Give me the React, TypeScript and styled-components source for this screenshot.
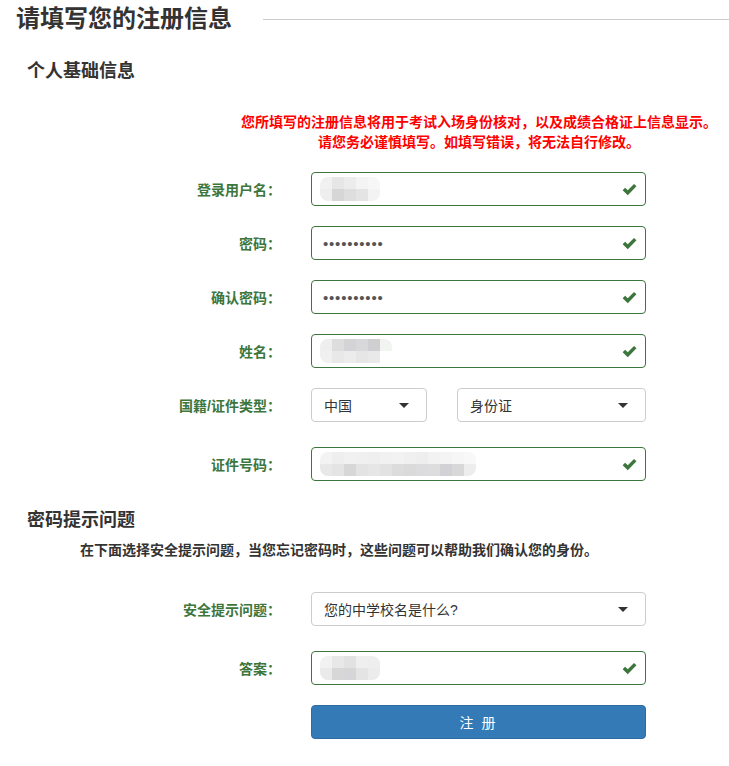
import { createGlobalStyle, styled } from 'styled-components'

const GlobalStyle = createGlobalStyle`
  html, body {
    margin: 0;
    padding: 0;
    background: #fff;
  }
  body {
    font-family: 'Liberation Sans', 'Noto Sans CJK SC', sans-serif;
    color: #333;
  }
`

type Cell = string

const userCells: Cell[][] = [
  ['#f1f1f1', '#e6e6e6', '#ececec', '#f4f4f4', '#f7f7f7'],
  ['#eeeeee', '#d6d6d6', '#dedede', '#e4e4e4', '#f3f3f3'],
]
const nameCells: Cell[][] = [
  ['#eeeeee', '#dddddd', '#d4d4d6', '#d8d8da', '#cfcfd2', '#f2f4f2'],
  ['#f0f0f0', '#e8e8e8', '#ececec', '#e6e6e6', '#e9e9e9', '#ffffff'],
]
const idCells: Cell[][] = [
  ['#f3f3f3', '#eeeeee', '#f1f1f1', '#f0f0f0', '#efefef', '#f1f1f1', '#f2f2f2', '#f0f0f0', '#eeeeee', '#f2f2f2', '#f4f4f4', '#f6f6f6', '#f8f8f8'],
  ['#e8e8e8', '#e4e4e4', '#d7d7d7', '#e3e3e3', '#e6e6e6', '#e2e2e2', '#dcdcdc', '#dadada', '#dcdcdf', '#dddddd', '#d2d2d6', '#d8d8d8', '#ededed'],
]
const answerCells: Cell[][] = [
  ['#f2f2f2', '#e8e8e8', '#e2e2e2', '#efefef', '#eeeeee'],
  ['#eaeaea', '#d7d7d7', '#d6d6d8', '#e4e4e4', '#ececec'],
]

const CheckIcon = () => (
  <CheckSvg viewBox="0 0 14 12" width="15" height="13">
    <path d="M0.6 6.6 L2.9 4.4 L5.4 6.8 L11.2 0.8 L13.5 3.0 L5.4 11.3 Z" fill="#3c763d" />
  </CheckSvg>
)

const Caret = () => <CaretShape />

const Mosaic = ({ cells, size }: { cells: Cell[][]; size: number }) => (
  <MosaicBox>
    {cells.map((row, i) => (
      <MosaicRow key={i}>
        {row.map((c, j) => (
          <MosaicCell key={j} $size={size} style={{ background: c }} />
        ))}
      </MosaicRow>
    ))}
  </MosaicBox>
)

const Dots = () => <DotText>••••••••••</DotText>

const App = () => {
  return (
    <>
      <GlobalStyle />
      <Page>
        <Header>
          <Title>请填写您的注册信息</Title>
          <HeaderRule />
        </Header>

        <SectionTitle>个人基础信息</SectionTitle>

        <Notice>
          您所填写的注册信息将用于考试入场身份核对，以及成绩合格证上信息显示。
          <br />
          请您务必谨慎填写。如填写错误，将无法自行修改。
        </Notice>

        <Form>
          <Row>
            <Label>登录用户名：</Label>
            <Field>
              <Input $ok>
                <Mosaic cells={userCells} size={12} />
                <CheckIcon />
              </Input>
            </Field>
          </Row>

          <Row>
            <Label>密码：</Label>
            <Field>
              <Input $ok>
                <Dots />
                <CheckIcon />
              </Input>
            </Field>
          </Row>

          <Row>
            <Label>确认密码：</Label>
            <Field>
              <Input $ok>
                <Dots />
                <CheckIcon />
              </Input>
            </Field>
          </Row>

          <Row>
            <Label>姓名：</Label>
            <Field>
              <Input $ok>
                <Mosaic cells={nameCells} size={12} />
                <CheckIcon />
              </Input>
            </Field>
          </Row>

          <Row $extra>
            <Label>国籍/证件类型：</Label>
            <SplitField>
              <Select $width={116}>
                <span>中国</span>
                <Caret />
              </Select>
              <Select $width={189}>
                <span>身份证</span>
                <Caret />
              </Select>
            </SplitField>
          </Row>

          <Row>
            <Label>证件号码：</Label>
            <Field>
              <Input $ok>
                <Mosaic cells={idCells} size={12} />
                <CheckIcon />
              </Input>
            </Field>
          </Row>
        </Form>

        <SectionTitle $second>密码提示问题</SectionTitle>
        <Hint>在下面选择安全提示问题，当您忘记密码时，这些问题可以帮助我们确认您的身份。</Hint>

        <Form $second>
          <Row $extra>
            <Label>安全提示问题：</Label>
            <Field>
              <Select $width={335}>
                <span>您的中学校名是什么?</span>
                <Caret />
              </Select>
            </Field>
          </Row>

          <Row>
            <Label>答案：</Label>
            <Field>
              <Input $ok>
                <Mosaic cells={answerCells} size={12} />
                <CheckIcon />
              </Input>
            </Field>
          </Row>

          <Row>
            <Label />
            <Field>
              <SubmitButton type="button">注 册</SubmitButton>
            </Field>
          </Row>
        </Form>
      </Page>
    </>
  )
}

export default App

const Page = styled.div`
  width: 729px;
  padding: 2px 0 20px;
  box-sizing: border-box;
`

const Header = styled.div`
  display: flex;
  align-items: center;
  padding-left: 16px;
`

const Title = styled.h1`
  margin: 0;
  font-size: 24px;
  line-height: 34px;
  font-weight: bold;
  color: #333;
`

const HeaderRule = styled.div`
  flex: 1;
  height: 1px;
  background: #cccccc;
  margin-left: 31px;
  margin-top: 1px;
`

const SectionTitle = styled.h2<{ $second?: boolean }>`
  margin: ${(p) => (p.$second ? '26px' : '22px')} 0 0 27px;
  font-size: 18px;
  line-height: 26px;
  font-weight: bold;
  color: #333;
`

const Notice = styled.p`
  margin: 28px 0 0 229px;
  width: 500px;
  text-align: center;
  color: #ff0000;
  font-size: 14px;
  line-height: 20px;
  font-weight: bold;
`

const Hint = styled.p`
  margin: 7px 0 0 80px;
  font-size: 14px;
  line-height: 20px;
  font-weight: bold;
  color: #333;
`

const Form = styled.div<{ $second?: boolean }>`
  display: flex;
  flex-direction: column;
  gap: 20px;
  margin-top: ${(p) => (p.$second ? '32px' : '20px')};
`

const Row = styled.div<{ $extra?: boolean }>`
  display: flex;
  align-items: center;
  margin-bottom: ${(p) => (p.$extra ? '5px' : '0')};
`

const Label = styled.label`
  width: 281px;
  text-align: right;
  color: #3c763d;
  font-size: 14px;
  font-weight: bold;
  flex-shrink: 0;
`

const Field = styled.div`
  margin-left: 30px;
  width: 335px;
`

const SplitField = styled(Field)`
  display: flex;
  justify-content: space-between;
`

const Input = styled.div<{ $ok?: boolean }>`
  height: 34px;
  box-sizing: border-box;
  border: 1px solid ${(p) => (p.$ok ? '#3c763d' : '#cccccc')};
  border-radius: 4px;
  display: flex;
  align-items: center;
  justify-content: space-between;
  padding: 0 8px 0 8px;
  background: #fff;
`

const Select = styled.div<{ $width: number }>`
  width: ${(p) => p.$width}px;
  height: 34px;
  box-sizing: border-box;
  border: 1px solid #cccccc;
  border-radius: 4px;
  display: flex;
  align-items: center;
  justify-content: space-between;
  padding: 0 17px 0 12px;
  font-size: 14px;
  color: #333;
  background: #fff;
`

const CaretShape = styled.span`
  width: 0;
  height: 0;
  border-left: 5px solid transparent;
  border-right: 5px solid transparent;
  border-top: 5px solid #333;
`

const CheckSvg = styled.svg`
  margin-right: 0;
  flex-shrink: 0;
`

const MosaicBox = styled.div`
  display: flex;
  flex-direction: column;
  filter: blur(0.6px);
  border-radius: 8px;
  overflow: hidden;
`

const MosaicRow = styled.div`
  display: flex;
`

const MosaicCell = styled.span<{ $size: number }>`
  display: block;
  width: ${(p) => p.$size}px;
  height: ${(p) => p.$size}px;
`

const DotText = styled.span`
  font-size: 15px;
  letter-spacing: 0.8px;
  color: #555;
  padding-left: 3px;
`

const SubmitButton = styled.button`
  width: 335px;
  height: 34px;
  border: 1px solid #2e6da4;
  border-radius: 4px;
  background: #337ab7;
  color: #fff;
  font-family: 'Liberation Sans', 'Noto Sans CJK SC', sans-serif;
  font-size: 14px;
  letter-spacing: 2px;
  cursor: pointer;
`
